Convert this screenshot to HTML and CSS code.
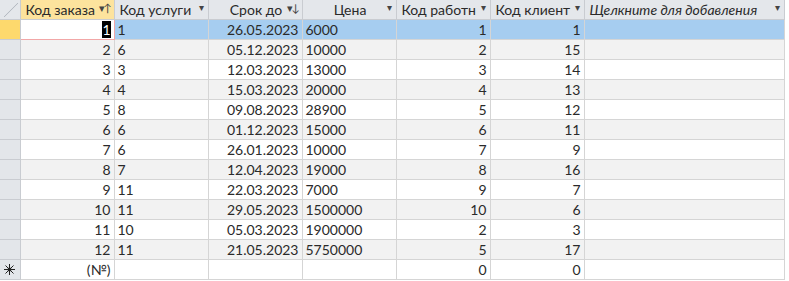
FILE: index.html
```html
<!DOCTYPE html>
<html lang="ru">
<head>
    <meta charset="UTF-8">
    <title>Заказы</title>
    <link rel="stylesheet" href="styles.css">
</head>
<body>
    <table class="sheet">
        <thead>
            <tr>
                <th class="corner"><span class="diag"></span></th>
                <th class="left active">Код заказа <span class="arr sort">▾↑</span></th>
                <th class="left">Код услуги <span class="arr">▾</span></th>
                <th class="center">Срок до <span class="arr sort">▾↓</span></th>
                <th class="center">Цена <span class="arr">▾</span></th>
                <th class="left">Код работн <span class="arr">▾</span></th>
                <th class="left">Код клиент <span class="arr">▾</span></th>
                <th class="left add">Щелкните для добавления <span class="arr">▾</span></th>
            </tr>
        </thead>
        <tbody>
            <tr class="current">
                <td class="sel"></td>
                <td class="num focus"><span class="hl">1</span></td>
                <td>1</td><td class="num">26.05.2023</td><td>6000</td>
                <td class="num">1</td><td class="num">1</td><td></td>
            </tr>
            <tr><td class="sel"></td><td class="num">2</td><td>6</td><td class="num">05.12.2023</td><td>10000</td><td class="num">2</td><td class="num">15</td><td></td></tr>
            <tr><td class="sel"></td><td class="num">3</td><td>3</td><td class="num">12.03.2023</td><td>13000</td><td class="num">3</td><td class="num">14</td><td></td></tr>
            <tr><td class="sel"></td><td class="num">4</td><td>4</td><td class="num">15.03.2023</td><td>20000</td><td class="num">4</td><td class="num">13</td><td></td></tr>
            <tr><td class="sel"></td><td class="num">5</td><td>8</td><td class="num">09.08.2023</td><td>28900</td><td class="num">5</td><td class="num">12</td><td></td></tr>
            <tr><td class="sel"></td><td class="num">6</td><td>6</td><td class="num">01.12.2023</td><td>15000</td><td class="num">6</td><td class="num">11</td><td></td></tr>
            <tr><td class="sel"></td><td class="num">7</td><td>6</td><td class="num">26.01.2023</td><td>10000</td><td class="num">7</td><td class="num">9</td><td></td></tr>
            <tr><td class="sel"></td><td class="num">8</td><td>7</td><td class="num">12.04.2023</td><td>19000</td><td class="num">8</td><td class="num">16</td><td></td></tr>
            <tr><td class="sel"></td><td class="num">9</td><td>11</td><td class="num">22.03.2023</td><td>7000</td><td class="num">9</td><td class="num">7</td><td></td></tr>
            <tr><td class="sel"></td><td class="num">10</td><td>11</td><td class="num">29.05.2023</td><td>1500000</td><td class="num">10</td><td class="num">6</td><td></td></tr>
            <tr><td class="sel"></td><td class="num">11</td><td>10</td><td class="num">05.03.2023</td><td>1900000</td><td class="num">2</td><td class="num">3</td><td></td></tr>
            <tr><td class="sel"></td><td class="num">12</td><td>11</td><td class="num">21.05.2023</td><td>5750000</td><td class="num">5</td><td class="num">17</td><td></td></tr>
            <tr class="new">
                <td class="sel star">
                    <svg width="11" height="11" viewBox="0 0 11 11">
                        <g stroke="#222" stroke-width="1">
                            <line x1="5.5" y1="0" x2="5.5" y2="11"/>
                            <line x1="0" y1="5.5" x2="11" y2="5.5"/>
                            <line x1="1.5" y1="1.5" x2="9.5" y2="9.5"/>
                            <line x1="9.5" y1="1.5" x2="1.5" y2="9.5"/>
                        </g>
                        <circle cx="5.5" cy="5.5" r="2" fill="#222"/>
                    </svg>
                </td>
                <td class="num">(№)</td>
                <td></td><td></td><td></td>
                <td class="num">0</td><td class="num">0</td><td></td>
            </tr>
        </tbody>
    </table>
</body>
</html>
```

FILE: styles.css
```css
body {
    margin: 0;
    background: #ffffff;
    font-family: Lato, "Liberation Sans", sans-serif;
    font-size: 14px;
    color: #2a2a2a;
    overflow: hidden;
}
.sheet {
    border-collapse: collapse;
    table-layout: fixed;
    width: 784px;
}
.sheet th,
.sheet td {
    border: 1px solid #d5d5d5;
    padding: 0 3px;
    white-space: nowrap;
    overflow: hidden;
    box-sizing: border-box;
}
.sheet th {
    height: 19px;
    padding-left: 5px;
    font-weight: normal;
    background: #e4e7eb;
    border-color: #c9ccd1;
    border-top: none;
    position: relative;
}
.sheet th:first-child,
.sheet td:first-child {
    border-left: none;
}
.sheet td {
    height: 20px;
}
.sheet th:nth-child(1) { width: 20px; }
.sheet th:nth-child(2) { width: 94px; }
.sheet th:nth-child(3) { width: 94px; }
.sheet th:nth-child(4) { width: 94px; }
.sheet th:nth-child(5) { width: 94px; }
.sheet th:nth-child(6) { width: 94px; }
.sheet th:nth-child(7) { width: 94px; }
.sheet th:nth-child(8) { width: 200px; }
.left { text-align: left; }
.center { text-align: center; }
.add { font-style: italic; }
.active {
    background: #fde39d !important;
}
.corner {
    background: #e4e7eb;
}
.diag {
    position: absolute;
    right: 2px;
    bottom: 2px;
    width: 14px;
    height: 14px;
    background: linear-gradient(to top left, transparent 46%, #b7bcc3 50%, transparent 54%);
}
.arr {
    position: absolute;
    right: 4px;
    top: 1px;
    font-size: 10px;
    font-style: normal;
    color: #444;
    background: inherit;
    padding-left: 3px;
}
.arr.sort {
    font-size: 11px;
    letter-spacing: -2px;
}
.sel {
    background: #e3e6ea;
    border-color: #c9ccd1 !important;
    padding: 0 !important;
}
.current .sel {
    background: #fdd96d;
}
.star {
    text-align: center;
    line-height: 0;
}
.sheet tbody tr:nth-child(even) td {
    background: #f2f2f2;
}
.sheet tbody tr:nth-child(even) td.sel {
    background: #e3e6ea;
}
.current td {
    background: #a6cdf0;
}
.current td.focus {
    background: #ffffff;
    border: 1px solid #f2a7a7;
}
.num {
    text-align: right;
}
.hl {
    background: #000000;
    color: #ffffff;
}
```
